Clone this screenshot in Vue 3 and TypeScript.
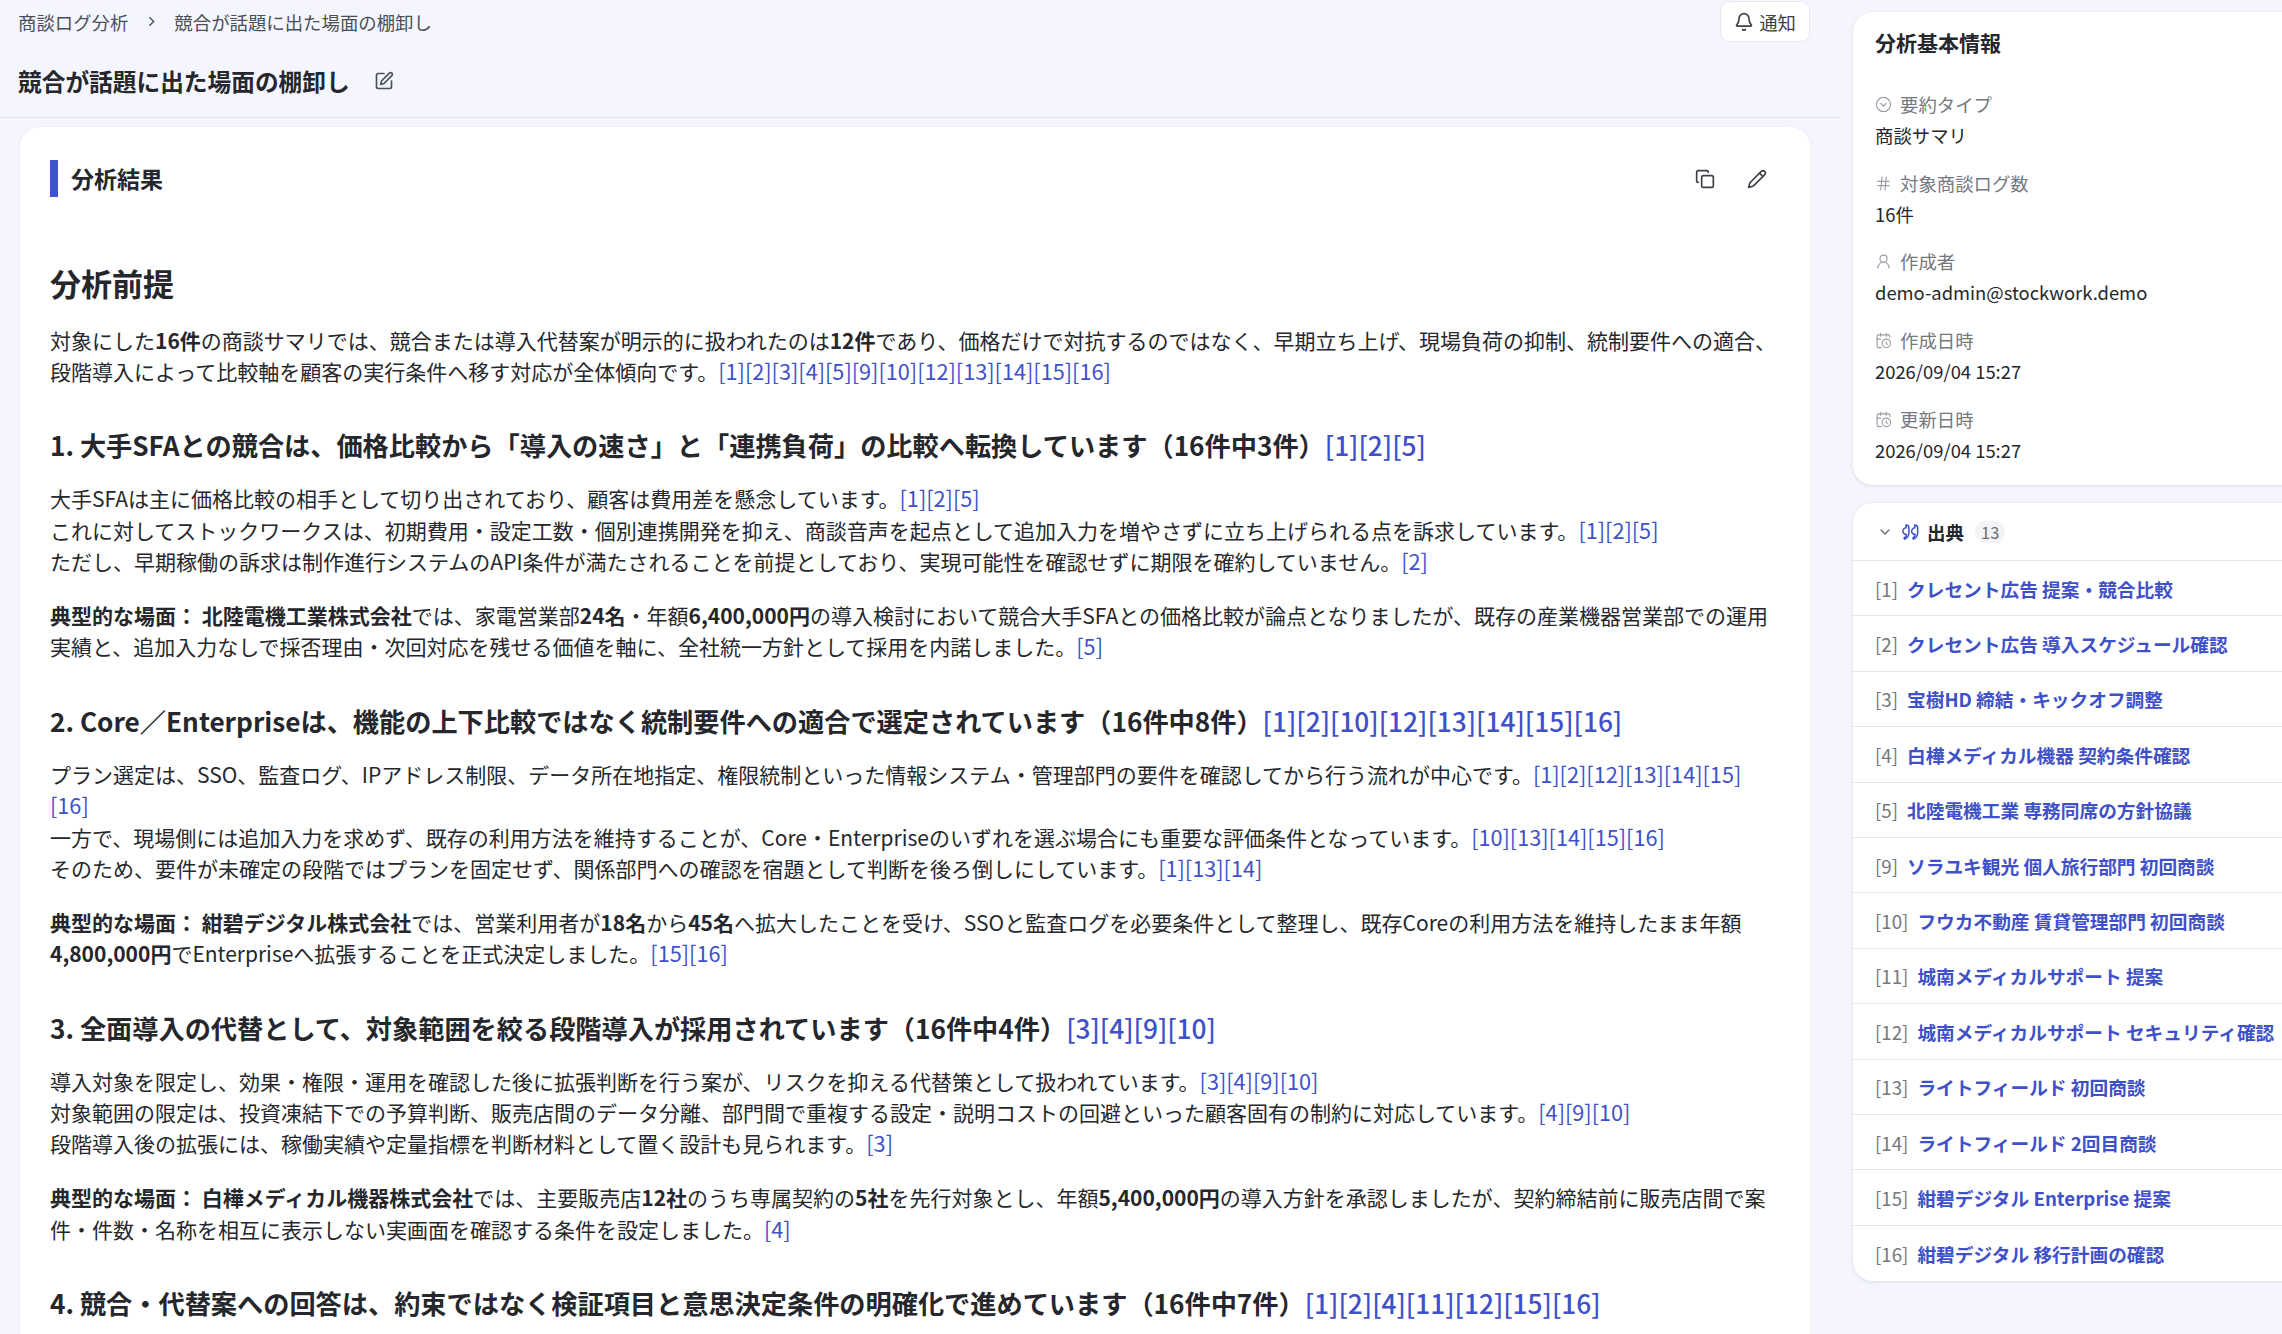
<template>
  <div class="page">
    <main class="main">
      <header class="topbar">
        <nav class="crumbs">
          <span>商談ログ分析</span>
          <svg class="crumb-sep" viewBox="0 0 24 24"><path d="m9 6 6 6-6 6" /></svg>
          <span>競合が話題に出た場面の棚卸し</span>
        </nav>
        <button class="notify">
          <svg class="ic" viewBox="0 0 24 24">
            <path d="M10.3 21a2 2 0 0 0 3.4 0" />
            <path d="M3.3 15.3A1 1 0 0 0 4 17h16a1 1 0 0 0 .7-1.7C19.4 14 18 12.500 18 8A6 6 0 0 0 6 8c0 4.500-1.400 6-2.700 7.300" />
          </svg>
          通知
        </button>
      </header>
      <div class="title-row">
        <h1>競合が話題に出た場面の棚卸し</h1>
        <svg class="ic title-ic" viewBox="0 0 24 24">
          <path d="M12 3H5a2 2 0 0 0-2 2v14a2 2 0 0 0 2 2h14a2 2 0 0 0 2-2v-7" />
          <path d="M18.400 2.600a2.100 2.100 0 1 1 3 3L12 15l-4 1 1-4Z" />
        </svg>
      </div>

      <section class="result">
        <div class="result-head">
          <div class="result-title">分析結果</div>
          <div class="result-tools">
            <svg class="ic" viewBox="0 0 24 24">
              <rect x="8" y="8" width="14" height="14" rx="2" />
              <path d="M4 16c-1.100 0-2-.9-2-2V4c0-1.100.9-2 2-2h10c1.100 0 2 .9 2 2" />
            </svg>
            <svg class="ic" viewBox="0 0 24 24">
              <path d="M21.200 6.800a2.800 2.800 0 0 0-4-4L3.800 16.200a2 2 0 0 0-.5.8L2 22l5-1.300a2 2 0 0 0 .8-.5z" />
              <path d="m15 5 4 4" />
            </svg>
          </div>
        </div>

        <article class="body">
          <h2>分析前提</h2>
          <p>
            対象にした<b>16件</b>の商談サマリでは、競合または導入代替案が明示的に扱われたのは<b>12件</b>であり、価格だけで対抗するのではなく、早期立ち上げ、現場負荷の抑制、統制要件への適合、<br />段階導入によって比較軸を顧客の実行条件へ移す対応が全体傾向です。<a>[1][2][3][4][5][9][10][12][13][14][15][16]</a>
          </p>

          <h3>1. 大手SFAとの競合は、価格比較から「導入の速さ」と「連携負荷」の比較へ転換しています（16件中3件）<a>[1][2][5]</a></h3>
          <p>
            大手SFAは主に価格比較の相手として切り出されており、顧客は費用差を懸念しています。<a>[1][2][5]</a><br />
            これに対してストックワークスは、初期費用・設定工数・個別連携開発を抑え、商談音声を起点として追加入力を増やさずに立ち上げられる点を訴求しています。<a>[1][2][5]</a><br />
            ただし、早期稼働の訴求は制作進行システムのAPI条件が満たされることを前提としており、実現可能性を確認せずに期限を確約していません。<a>[2]</a>
          </p>
          <p>
            <b>典型的な場面： 北陸電機工業株式会社</b>では、家電営業部<b>24名</b>・年額<b>6,400,000円</b>の導入検討において競合大手SFAとの価格比較が論点となりましたが、既存の産業機器営業部での運用<br />実績と、追加入力なしで採否理由・次回対応を残せる価値を軸に、全社統一方針として採用を内諾しました。<a>[5]</a>
          </p>

          <h3>2. Core／Enterpriseは、機能の上下比較ではなく統制要件への適合で選定されています（16件中8件）<a>[1][2][10][12][13][14][15][16]</a></h3>
          <p>
            プラン選定は、SSO、監査ログ、IPアドレス制限、データ所在地指定、権限統制といった情報システム・管理部門の要件を確認してから行う流れが中心です。<a>[1][2][12][13][14][15]<br />[16]</a><br />
            一方で、現場側には追加入力を求めず、既存の利用方法を維持することが、Core・Enterpriseのいずれを選ぶ場合にも重要な評価条件となっています。<a>[10][13][14][15][16]</a><br />
            そのため、要件が未確定の段階ではプランを固定せず、関係部門への確認を宿題として判断を後ろ倒しにしています。<a>[1][13][14]</a>
          </p>
          <p>
            <b>典型的な場面： 紺碧デジタル株式会社</b>では、営業利用者が<b>18名</b>から<b>45名</b>へ拡大したことを受け、SSOと監査ログを必要条件として整理し、既存Coreの利用方法を維持したまま年額<br /><b>4,800,000円</b>でEnterpriseへ拡張することを正式決定しました。<a>[15][16]</a>
          </p>

          <h3>3. 全面導入の代替として、対象範囲を絞る段階導入が採用されています（16件中4件）<a>[3][4][9][10]</a></h3>
          <p>
            導入対象を限定し、効果・権限・運用を確認した後に拡張判断を行う案が、リスクを抑える代替策として扱われています。<a>[3][4][9][10]</a><br />
            対象範囲の限定は、投資凍結下での予算判断、販売店間のデータ分離、部門間で重複する設定・説明コストの回避といった顧客固有の制約に対応しています。<a>[4][9][10]</a><br />
            段階導入後の拡張には、稼働実績や定量指標を判断材料として置く設計も見られます。<a>[3]</a>
          </p>
          <p>
            <b>典型的な場面： 白樺メディカル機器株式会社</b>では、主要販売店<b>12社</b>のうち専属契約の<b>5社</b>を先行対象とし、年額<b>5,400,000円</b>の導入方針を承認しましたが、契約締結前に販売店間で案<br />件・件数・名称を相互に表示しない実画面を確認する条件を設定しました。<a>[4]</a>
          </p>

          <h3>4. 競合・代替案への回答は、約束ではなく検証項目と意思決定条件の明確化で進めています（16件中7件）<a>[1][2][4][11][12][15][16]</a></h3>
        </article>
      </section>
    </main>

    <aside class="side">
      <section class="panel info">
        <h4>分析基本情報</h4>
        <div v-for="item in infoItems" :key="item.label" class="info-item">
          <div class="info-label">
            <svg class="ic" viewBox="0 0 24 24"><path v-for="d in item.paths" :key="d" :d="d" /></svg>
            {{ item.label }}
          </div>
          <div class="info-value">{{ item.value }}</div>
        </div>
      </section>

      <section class="panel sources">
        <div class="sources-head">
          <svg class="ic chev" viewBox="0 0 24 24"><path d="m6 9 6 6 6-6" /></svg>
          <svg class="quote" viewBox="0 0 24 24">
            <path d="M6 3.500a3.500 3.500 0 0 1 3.500 3.500v6c0 3.500-2 6-5 7.500l-.8-1.200c1.500-1 2.500-2.300 2.800-4.300a3.500 3.500 0 0 1-.5-8Z" />
            <path d="M16.500 3.500A3.500 3.500 0 0 1 20 7v6c0 3.500-2 6-5 7.500l-.8-1.200c1.500-1 2.500-2.300 2.800-4.300a3.500 3.500 0 0 1-.5-8Z" />
          </svg>
          <span class="sources-title">出典</span>
          <span class="count">{{ sources.length }}</span>
        </div>
        <div v-for="s in sources" :key="s.no" class="source">
          <span class="no">[{{ s.no }}]</span>
          <span class="name">{{ s.name }}</span>
        </div>
      </section>
    </aside>
  </div>
</template>

<script setup lang="ts">
const calendarClock = [
  "M21 7.500V6a2 2 0 0 0-2-2H5a2 2 0 0 0-2 2v14a2 2 0 0 0 2 2h3.500",
  "M16 2v4",
  "M8 2v4",
  "M3 10h5",
  "M17.500 17.500 16 16.300V14",
  "M22 16a6 6 0 1 1-12 0 6 6 0 0 1 12 0Z",
]

const infoItems = [
  {
    label: "要約タイプ",
    value: "商談サマリ",
    paths: ["M22 12a10 10 0 1 1-20 0 10 10 0 0 1 20 0Z", "m8 10.500 4 4 4-4"],
  },
  {
    label: "対象商談ログ数",
    value: "16件",
    paths: ["M4 9h16", "M4 15h16", "M10 3 8 21", "M16 3l-2 18"],
  },
  {
    label: "作成者",
    value: "demo-admin@stockwork.demo",
    paths: ["M17 8a5 5 0 1 1-10 0 5 5 0 0 1 10 0Z", "M20 21a8 8 0 0 0-16 0"],
  },
  { label: "作成日時", value: "2026/09/04 15:27", paths: calendarClock },
  { label: "更新日時", value: "2026/09/04 15:27", paths: calendarClock },
]

const sources = [
  { no: 1, name: "クレセント広告 提案・競合比較" },
  { no: 2, name: "クレセント広告 導入スケジュール確認" },
  { no: 3, name: "宝樹HD 締結・キックオフ調整" },
  { no: 4, name: "白樺メディカル機器 契約条件確認" },
  { no: 5, name: "北陸電機工業 専務同席の方針協議" },
  { no: 9, name: "ソラユキ観光 個人旅行部門 初回商談" },
  { no: 10, name: "フウカ不動産 賃貸管理部門 初回商談" },
  { no: 11, name: "城南メディカルサポート 提案" },
  { no: 12, name: "城南メディカルサポート セキュリティ確認" },
  { no: 13, name: "ライトフィールド 初回商談" },
  { no: 14, name: "ライトフィールド 2回目商談" },
  { no: 15, name: "紺碧デジタル Enterprise 提案" },
  { no: 16, name: "紺碧デジタル 移行計画の確認" },
]
</script>

<style>
html,
body {
  margin: 0;
  background: #f5f6fd;
}
</style>

<style scoped>
.page {
  display: flex;
  width: 2282px;
  height: 1334px;
  overflow: hidden;
  background: #f5f6fd;
  color: #25272c;
  font-family: "Noto Sans CJK JP", "Noto Sans", sans-serif;
}
.ic {
  fill: none;
  stroke: currentColor;
  stroke-width: 2;
  stroke-linecap: round;
  stroke-linejoin: round;
  flex-shrink: 0;
}
.main {
  flex: 0 0 1840px;
}
.topbar {
  display: flex;
  justify-content: space-between;
  align-items: flex-start;
  height: 42px;
  padding: 1px 30px 0 18px;
}
.crumbs {
  display: flex;
  align-items: center;
  gap: 14.500px;
  height: 41px;
  font-size: 18.400px;
  color: #4b4f57;
}
.crumb-sep {
  width: 17px;
  height: 17px;
  fill: none;
  stroke: #4b4f57;
  stroke-width: 2;
}
.notify {
  display: flex;
  align-items: center;
  gap: 5px;
  height: 41px;
  padding: 0 13px;
  font: inherit;
  font-size: 18.400px;
  color: #3d4047;
  background: #fff;
  border: 1px solid #e6e8f0;
  border-radius: 9px;
}
.notify .ic {
  width: 20px;
  height: 20px;
}
.title-row {
  display: flex;
  align-items: center;
  gap: 24px;
  height: 72px;
  padding: 2px 0 0 18px;
  border-bottom: 1px solid #e3e5ec;
}
h1 {
  margin: 0;
  font-size: 23.700px;
  font-weight: 700;
}
.title-ic {
  width: 20px;
  height: 20px;
  color: #4b4f57;
}
.result {
  margin: 9px 30px 0 20px;
  padding: 33px 26px 120px 30px;
  background: #fff;
  border-radius: 20px;
  box-shadow: 0 0 3px rgba(30, 40, 90, 0.06);
}
.result-head {
  display: flex;
  justify-content: space-between;
  align-items: center;
}
.result-title {
  padding-left: 13px;
  font-size: 23px;
  font-weight: 700;
  line-height: 37px;
  border-left: 8px solid #3f51d6;
}
.result-tools {
  display: flex;
  gap: 32px;
  padding-right: 17px;
  color: #3d4047;
}
.result-tools .ic {
  width: 20px;
  height: 20px;
}
.body {
  margin-top: 63px;
  font-size: 21px;
  line-height: 31.400px;
}
h2 {
  margin: 0 0 18.500px;
  font-size: 31px;
  line-height: 46px;
  font-weight: 700;
}
h3 {
  margin: 38px 0 18px;
  font-size: 26.200px;
  line-height: 40px;
  font-weight: 700;
}
h3 a {
  font-size: 26.300px;
  font-weight: 500;
}
p {
  margin: 0 0 22.400px;
}
p a {
  font-size: 21.700px;
}
b {
  font-weight: 700;
}
a {
  color: #3f51c8;
  line-height: 0;
}
.side {
  flex: 0 0 442px;
  padding: 12px 0 0 13px;
  box-sizing: border-box;
  width: 442px;
}
.panel {
  width: 460px;
  background: #fff;
  border-radius: 20px 0 0 20px;
  box-shadow: 0 1px 4px rgba(30, 40, 90, 0.12);
}
.info {
  height: 473px;
  padding: 14px 22px 0;
  box-sizing: border-box;
}
h4 {
  margin: 0 0 31px;
  font-size: 21px;
  line-height: 32px;
  font-weight: 700;
}
.info-item {
  height: 78.700px;
  font-size: 18.400px;
  line-height: 31px;
}
.info-label {
  display: flex;
  align-items: center;
  gap: 8px;
  color: #75787f;
}
.info-label .ic {
  width: 17px;
  height: 17px;
  stroke-width: 1.600;
  color: #9a9da4;
}
.info-value {
  color: #25272c;
}
.sources {
  margin-top: 18px;
}
.sources-head {
  display: flex;
  align-items: center;
  height: 58px;
  padding-left: 24px;
  box-sizing: border-box;
  border-bottom: 1px solid #e4e5ea;
}
.chev {
  width: 16px;
  height: 16px;
  color: #6c6f76;
}
.quote {
  width: 20px;
  height: 20px;
  margin-left: 8px;
  fill: none;
  stroke: #3f51c8;
  stroke-width: 1.800;
}
.sources-title {
  margin-left: 6px;
  font-size: 18.500px;
  font-weight: 700;
}
.count {
  margin-left: 11px;
  padding: 0 6px;
  font-size: 16.500px;
  line-height: 22px;
  color: #6c6f76;
  background: #f3f3f5;
  border-radius: 11px;
}
.source {
  display: flex;
  align-items: center;
  gap: 9px;
  height: 55.400px;
  padding-left: 22px;
  box-sizing: border-box;
  font-size: 18.700px;
  white-space: nowrap;
  border-bottom: 1px solid #e4e5ea;
}
.source:last-child {
  border-bottom: 0;
}
.no {
  color: #75787f;
}
.name {
  color: #3f51c8;
  font-weight: 700;
}
</style>
